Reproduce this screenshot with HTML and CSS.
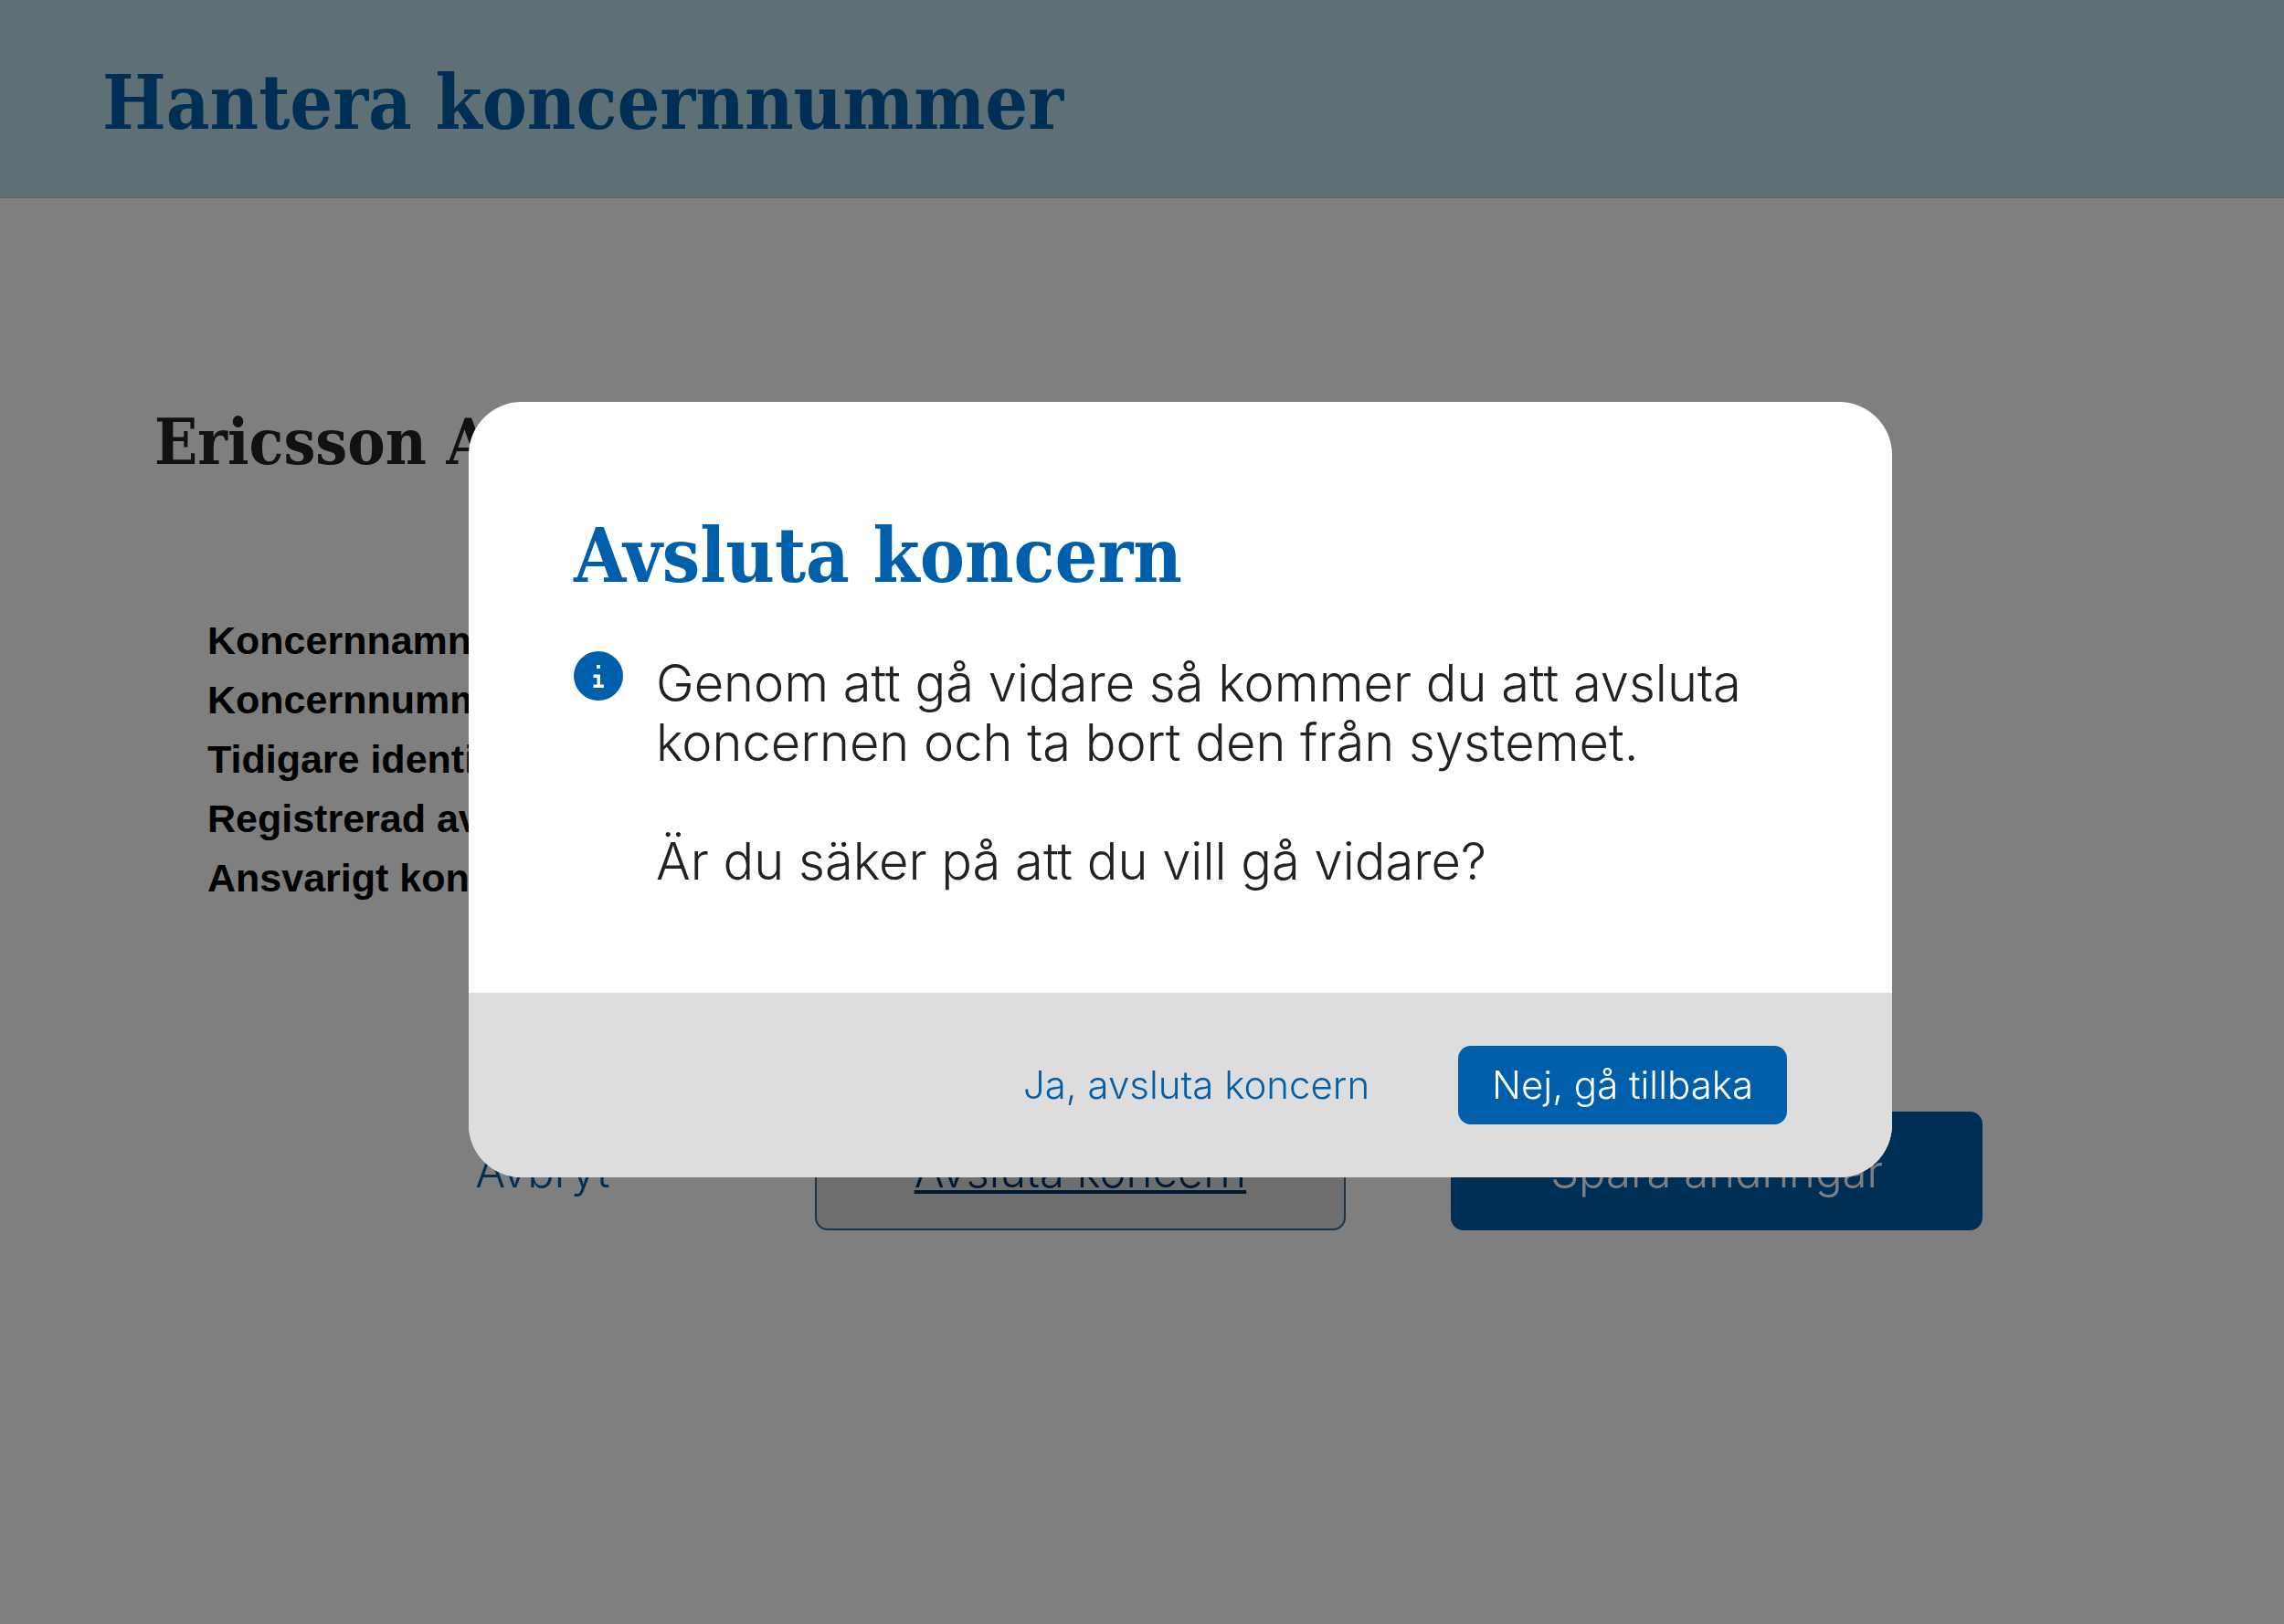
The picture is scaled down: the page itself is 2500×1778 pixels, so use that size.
FILE: index.html
```
<!DOCTYPE html>
<html lang="sv">

<head>
    <meta charset="UTF-8" />
    <title>Hantera koncernnummer</title>
    <link rel="stylesheet" href="styles.css">
</head>

<body>
    <header class="header">
        <h1>Hantera koncernnummer</h1>
    </header>

    <main class="content">
        <h2>Ericsson AB</h2>

        <ul class="info-list">
            <li>Koncernnamn</li>
            <li>Koncernnummer</li>
            <li>Tidigare identitet</li>
            <li>Registrerad av</li>
            <li>Ansvarigt kontor</li>
        </ul>

        <div class="actions">
            <button type="button" class="btn btn-link">Avbryt</button>
            <button type="button" class="btn btn-secondary">Avsluta koncern</button>
            <button type="button" class="btn btn-primary">Spara ändringar</button>
        </div>
    </main>

    <!-- Dialog -->
    <div class="overlay">
        <div class="modal" role="dialog" aria-modal="true" aria-labelledby="modal-title">
            <div class="modal-body">
                <h2 id="modal-title">Avsluta koncern</h2>
                <div class="message">
                    <svg class="icon" viewBox="0 0 54 54" aria-hidden="true">
                        <circle cx="27" cy="27" r="27" fill="#005fab" />
                        <path d="M25 15h4v4h-4zM21.500 25.500h7.500v11h4v3.500h-11.500v-3.500h4v-7.500h-4z" fill="#fff" />
                    </svg>
                    <div class="message-text">
                        <p>Genom att gå vidare så kommer du att avsluta<br>koncernen och ta bort den från systemet.</p>
                        <p>Är du säker på att du vill gå vidare?</p>
                    </div>
                </div>
            </div>
            <div class="modal-footer">
                <button type="button" class="btn-small btn-link">Ja, avsluta koncern</button>
                <button type="button" class="btn-small btn-primary">Nej, gå tillbaka</button>
            </div>
        </div>
    </div>
</body>

</html>
```

FILE: styles.css
```
* {
    margin: 0;
    padding: 0;
    box-sizing: border-box;
}

body {
    min-height: 100vh;
    background-color: #fff;
    color: #222;
    font-family: "Helvetica Neue", Inter, "Liberation Sans", sans-serif;
    font-weight: 300;
}

h1,
h2 {
    font-family: "Roboto Slab", "DejaVu Serif Condensed", "DejaVu Serif", serif;
    font-weight: 700;
    line-height: 100px;
}

ul {
    list-style: none;
}

.header {
    padding: 62px 112px 54px;
    border-bottom: 1px solid #b4cbd2;
    background-color: #bde1ec;
}

.header h1 {
    color: #005fab;
    font-size: 82px;
}

.content {
    padding: 217px 330px 0 169px;
}

.content h2 {
    font-size: 69px;
}

.info-list {
    padding: 135px 58px 0;
    color: #000;
    font-family: "Liberation Sans", sans-serif;
    font-size: 43px;
    font-weight: 700;
    line-height: 65px;
}

.actions {
    display: flex;
    justify-content: flex-end;
    gap: 115px;
    padding-top: 223px;
}

.btn {
    height: 130px;
    padding: 0 107px;
    border: 2px solid transparent;
    border-radius: 14px;
    font: inherit;
    font-size: 49px;
    cursor: pointer;
}

.btn-small {
    height: 86px;
    padding: 0 37px;
    border: 0;
    border-radius: 14px;
    font: inherit;
    font-size: 42px;
    cursor: pointer;
}

.btn-link {
    background: none;
    color: #005fab;
}

.btn-secondary {
    border-color: #336699;
    background-color: #ddd;
    color: #003366;
    text-decoration: underline;
}

.btn-primary {
    background-color: #005fab;
    color: #fff;
}

.overlay {
    display: flex;
    position: fixed;
    inset: 0;
    align-items: center;
    justify-content: center;
    padding: 0 0 50px 84px;
    background-color: rgba(0, 0, 0, 0.5);
}

.modal {
    overflow: hidden;
    width: 1558px;
    max-width: 100%;
    border-radius: 58px;
    background-color: #fff;
}

.modal-body {
    padding: 118px 115px 111px;
}

.modal-body h2 {
    color: #005fab;
    font-size: 82px;
}

.message {
    display: flex;
    gap: 36px;
    padding-top: 55px;
}

.icon {
    flex: none;
    width: 54px;
    height: 54px;
}

.message-text {
    padding-top: 3px;
    font-size: 56px;
    line-height: 65px;
}

.message-text p+p {
    margin-top: 65px;
}

.modal-footer {
    display: flex;
    justify-content: flex-end;
    gap: 60px;
    padding: 58px 115px;
    background-color: #ddd;
}
```
